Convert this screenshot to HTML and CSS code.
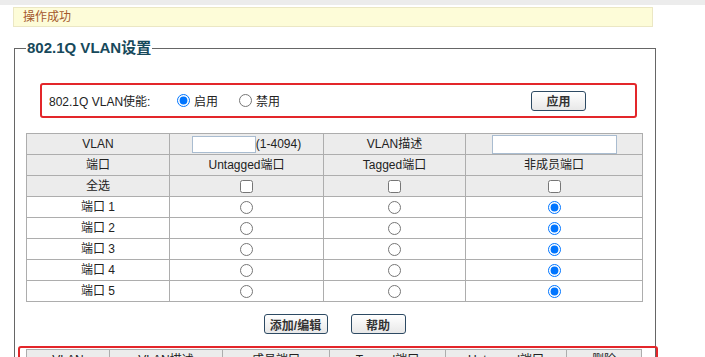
FILE: index.html
```html
<!DOCTYPE html>
<html lang="zh-CN">
  <head>
    <meta charset="UTF-8" />
    <title>802.1Q VLAN设置</title>
    <link rel="stylesheet" href="styles.css">
  </head>
  <body>
    <div class="topbar"></div>
    <div class="notice">操作成功</div>
    <fieldset class="panel">
      <legend>802.1Q VLAN设置</legend>
      <div class="enable-box">
        <span class="enable-label">802.1Q VLAN使能:</span>
        <label class="opt"><input type="radio" name="en" checked />启用</label>
        <label class="opt"><input type="radio" name="en" />禁用</label>
        <button class="btn btn-apply">应用</button>
      </div>
      <table class="grid">
        <colgroup>
          <col style="width:143px" />
          <col style="width:154px" />
          <col style="width:142px" />
          <col style="width:177px" />
        </colgroup>
        <tr class="head">
          <td>VLAN</td>
          <td><input type="text" class="vid" />(1-4094)</td>
          <td>VLAN描述</td>
          <td><input type="text" class="desc" /></td>
        </tr>
        <tr class="head">
          <td>端口</td>
          <td>Untagged端口</td>
          <td>Tagged端口</td>
          <td>非成员端口</td>
        </tr>
        <tr class="head">
          <td>全选</td>
          <td><input type="checkbox" /></td>
          <td><input type="checkbox" /></td>
          <td><input type="checkbox" /></td>
        </tr>
        <tr>
          <td>端口 1</td>
          <td><input type="radio" name="p1" /></td>
          <td><input type="radio" name="p1" /></td>
          <td><input type="radio" name="p1" checked /></td>
        </tr>
        <tr>
          <td>端口 2</td>
          <td><input type="radio" name="p2" /></td>
          <td><input type="radio" name="p2" /></td>
          <td><input type="radio" name="p2" checked /></td>
        </tr>
        <tr>
          <td>端口 3</td>
          <td><input type="radio" name="p3" /></td>
          <td><input type="radio" name="p3" /></td>
          <td><input type="radio" name="p3" checked /></td>
        </tr>
        <tr>
          <td>端口 4</td>
          <td><input type="radio" name="p4" /></td>
          <td><input type="radio" name="p4" /></td>
          <td><input type="radio" name="p4" checked /></td>
        </tr>
        <tr>
          <td>端口 5</td>
          <td><input type="radio" name="p5" /></td>
          <td><input type="radio" name="p5" /></td>
          <td><input type="radio" name="p5" checked /></td>
        </tr>
      </table>
      <div class="actions">
        <button class="btn btn-add">添加/编辑</button>
        <button class="btn btn-help">帮助</button>
      </div>
      <div class="list-box">
        <table class="grid list">
          <colgroup>
            <col style="width:83px" />
            <col style="width:113px" />
            <col style="width:107px" />
            <col style="width:116px" />
            <col style="width:121px" />
            <col style="width:75px" />
          </colgroup>
          <tr class="head">
            <td>VLAN</td>
            <td>VLAN描述</td>
            <td>成员端口</td>
            <td>Tagged端口</td>
            <td>Untagged端口</td>
            <td>删除</td>
          </tr>
          <tr>
            <td>1</td>
            <td>Default</td>
            <td>1-5</td>
            <td></td>
            <td>1-5</td>
            <td></td>
          </tr>
        </table>
      </div>
    </fieldset>
  </body>
</html>
```

FILE: styles.css
```css
body {
  margin: 0;
  font-family: "Liberation Sans", "Noto Sans CJK SC", sans-serif;
  font-size: 12px;
  color: #222;
  background-color: #fff;
}

.topbar {
  height: 5px;
  background-color: #ececec;
}

.notice {
  margin: 2px 0 0 13px;
  width: 640px;
  height: 20px;
  box-sizing: border-box;
  padding-left: 9px;
  line-height: 18px;
  background-color: #fdfcd8;
  border: 1px solid #ebe7c4;
  color: #a4582c;
}

.panel {
  margin: 11px 0 0 14px;
  width: 642px;
  box-sizing: border-box;
  padding: 0 12px 20px 11px;
  border: 1px solid #666;
  min-width: 0;
}

.panel legend {
  padding: 0 1px;
  margin-left: 0;
  font-size: 15px;
  line-height: 20px;
  font-weight: bold;
  color: #17495b;
}

.enable-box {
  margin: 25px 6px 0 14px;
  height: 35px;
  box-sizing: border-box;
  border: 2px solid #e3262a;
  border-radius: 3px;
  display: flex;
  align-items: center;
  padding-left: 7px;
  padding-right: 49px;
}

.enable-label {
  width: 122px;
}

.opt {
  display: flex;
  align-items: center;
  margin-right: 15px;
}

.opt input {
  margin: 0 4px 0 6px;
  width: 13px;
  height: 13px;
}

.btn {
  height: 20px;
  padding: 0;
  font-family: inherit;
  font-size: 12px;
  font-weight: bold;
  color: #333;
  background: linear-gradient(#ffffff, #e8e8e8);
  border: 1px solid #2d4a63;
  border-radius: 3px;
}

.btn-apply {
  margin-left: auto;
  width: 55px;
}

.grid {
  margin-top: 15px;
  border-collapse: collapse;
  table-layout: fixed;
  width: 616px;
}

.grid td {
  height: 20px;
  padding: 0;
  border: 1px solid #adadad;
  text-align: center;
  vertical-align: middle;
  line-height: 18px;
}

.grid .head td {
  background-color: #ececec;
}

.grid input[type="radio"],
.grid input[type="checkbox"] {
  margin: 0;
  width: 13px;
  height: 13px;
  vertical-align: middle;
}

.grid input[type="text"] {
  box-sizing: border-box;
  padding: 0 2px;
  border: 1px solid #a9bcd0;
  vertical-align: middle;
  background-color: #fff;
}

.vid {
  width: 64px;
  height: 17px;
}

.desc {
  width: 125px;
  height: 19px;
}

.actions {
  margin-top: 12px;
  display: flex;
  justify-content: center;
  gap: 23px;
}

.btn-add {
  width: 64px;
}

.btn-help {
  width: 55px;
}

.list-box {
  margin: 12px -15px 0 -8px;
  padding: 1px 5px 5px 6px;
  border: 2px solid #e3262a;
  border-radius: 3px;
}

.list-box .grid {
  margin-top: 0;
  width: 615px;
}
```
